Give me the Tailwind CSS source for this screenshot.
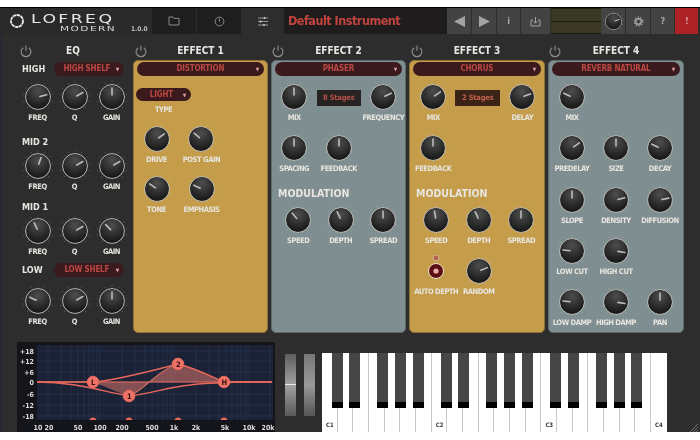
<!DOCTYPE html>
<html lang="en">
<head>
<meta charset="UTF-8">
<title>LoFreq Modern</title>
<script src="https://cdn.jsdelivr.net/npm/@tailwindcss/browser@4"></script>
</head>
<body class="w-[700px] h-[440px] overflow-hidden bg-white font-['DejaVu_Sans',sans-serif] font-stretch-condensed">

<!-- shared shapes -->
<svg class="absolute w-0 h-0">
  <defs>
    <radialGradient id="cap" cx="50%" cy="25%" r="75%">
      <stop offset="0" stop-color="#4e4e4e"/>
      <stop offset="1" stop-color="#171717"/>
    </radialGradient>
  </defs>
  <symbol id="knob" viewBox="0 0 32 32">
    <path d="M5.4 26.6h.01M1.7 20.6h.01M1.2 13.7h.01M3.9 7.2h.01M9.2 2.6h.01M16 1h.01M22.8 2.6h.01M28.1 7.2h.01M30.8 13.7h.01M30.3 20.6h.01M26.6 26.6h.01" stroke="#e8e4da" stroke-opacity=".35" stroke-width=".9" stroke-linecap="round"/>
    <circle cx="16" cy="16" r="12.400" fill="#222" stroke="#e4e2dc" stroke-width=".8"/>
    <circle cx="16" cy="16" r="11.400" fill="url(#cap)"/>
  </symbol>
  <symbol id="ptr" viewBox="0 0 32 32">
    <path d="M16 14V7" stroke="#bcbcbc" stroke-width="1.600" stroke-linecap="round"/>
  </symbol>
  <symbol id="power" viewBox="0 0 12 12">
    <path d="M3.6 3.2a4.2 4.2 0 1 0 4.8 0M6 1.2v4.600" fill="none" stroke="#8c8c8c" stroke-width="1"/>
  </symbol>
</svg>

<div class="mt-[7px] h-[425px] w-[700px] flex flex-col bg-[#2d2d2e] border-t border-black shadow-[inset_2px_0_0_#262a33] text-[7.5px] tracking-[-0.45px] leading-[10px] font-bold text-[#e8e6e0] relative blur-[0.4px]">

  <!-- top bar -->
  <header class="h-[26px] flex shrink-0">
    <div class="w-[152px] bg-[#2a2a2b] flex relative">
      <svg class="w-[16px] h-[16px] ml-[9px] mt-[5px] shrink-0" viewBox="0 0 16 16"><circle cx="8" cy="8" r="6" fill="none" stroke="#eee" stroke-width="1.800" stroke-dasharray="3.400 .5"/></svg>
      <div class="ml-[6px] flex flex-col w-[90px] font-stretch-normal font-normal">
        <span class="block text-[11.5px] leading-[10px] mt-[6px] tracking-[1.6px] text-[#e6e6e6] scale-x-150 origin-left">LOFREQ</span>
        <span class="block text-[7px] leading-[7px] mt-[2px] ml-[29px] tracking-[1px] text-[#d8d8d8] scale-x-150 origin-left">MODERN</span>
      </div>
      <span class="absolute left-[131px] top-[16px] text-[6.5px] tracking-normal text-[#bdbdbd]">1.0.0</span>
    </div>
    <div class="w-[44px] bg-[#1e1e1f] flex items-center justify-center">
      <svg class="w-[12px] h-[10px]" viewBox="0 0 12 10"><path d="M1 9V1h4l1 1.400h5V9z" fill="none" stroke="#8a8a8a"/></svg>
    </div>
    <div class="w-[45px] bg-[#1e1e1f] border-l border-[#2a2a2a] flex items-center justify-center">
      <svg class="w-[11px] h-[11px]" viewBox="0 0 11 11"><circle cx="5.500" cy="5.500" r="4.400" fill="none" stroke="#8a8a8a"/><path d="M5.500 5.500V2.600" stroke="#8a8a8a"/></svg>
    </div>
    <div class="w-[43px] flex items-center justify-center">
      <svg class="w-[12px] h-[11px]" viewBox="0 0 12 11"><path d="M1 2h10M1 5.500h10M1 9h10" stroke="#9a9a9a"/><path d="M7.500 1v2M3.500 4.500v2M7 8v2" stroke="#ccc" stroke-width="1.400"/></svg>
    </div>
    <div class="w-[163px] bg-[#1e1c1c] flex items-center pl-[4px] text-[12.5px] tracking-[-0.5px] leading-none text-[#c2443f]">Default Instrument</div>
    <div class="w-[24px] bg-[#434344] flex items-center justify-center">
      <svg class="w-[13px] h-[13px]" viewBox="0 0 13 13"><path d="M12 1v11L1 6.500z" fill="#a4a4a4"/></svg>
    </div>
    <div class="w-[24px] ml-px bg-[#434344] flex items-center justify-center">
      <svg class="w-[13px] h-[13px]" viewBox="0 0 13 13"><path d="M1 1v11l11-5.500z" fill="#a4a4a4"/></svg>
    </div>
    <div class="w-[23px] ml-px bg-[#434344] flex items-center justify-center text-[9px] text-[#a8a8a8]">i</div>
    <div class="w-[29px] ml-px bg-[#434344] flex items-center justify-center">
      <svg class="w-[11px] h-[11px]" viewBox="0 0 11 11"><path d="M3 4H1v6h9V4H8M5.500 1v6M3.500 5.200l2 2 2-2" fill="none" stroke="#a4a4a4"/></svg>
    </div>
    <div class="w-[50px] ml-px flex flex-col bg-[#1e1c14]">
      <div class="h-[12px] mt-px bg-[#3c3826]"></div>
      <div class="h-[11px] mt-px bg-[#3c3826]"></div>
    </div>
    <div class="w-[24px] bg-[#434344] flex items-center justify-center">
      <svg class="w-[21px] h-[21px]" viewBox="0 0 32 32"><use href="#knob" width="32" height="32"/><use href="#ptr" width="32" height="32" transform="rotate(70 16 16)"/></svg>
    </div>
    <div class="w-[24px] ml-px bg-[#434344] flex items-center justify-center">
      <svg class="w-[11px] h-[11px]" viewBox="0 0 11 11"><circle cx="5.500" cy="5.500" r="2.800" fill="none" stroke="#a8a8a8" stroke-width="1.400"/><circle cx="5.500" cy="5.500" r="4.300" fill="none" stroke="#a8a8a8" stroke-width="1.300" stroke-dasharray="1.300 1.400"/></svg>
    </div>
    <div class="w-[23px] ml-px bg-[#434344] flex items-center justify-center text-[9px] text-[#a8a8a8]">?</div>
    <div class="w-[23px] ml-px bg-[#ad2226] flex items-center justify-center text-[9px] text-[#d8a0a0]">!</div>
  </header>

  <main class="flex pt-[8px] h-[299px] shrink-0">

    <!-- EQ -->
    <section class="w-[133px] shrink-0">
      <div class="h-[18px] flex items-center pl-[19px] text-[10px] tracking-normal">
        <svg class="w-[14px] h-[14px]"><use href="#power" width="14" height="14"/></svg>
        <span class="w-[80px] text-center">EQ</span>
      </div>
      <div class="pt-[2px] flex flex-col">
        <div class="h-[14px] flex items-center pl-[22px] text-[9px] tracking-normal">
          <span class="w-[32px]">HIGH</span>
          <div class="w-[70px] h-[14px] rounded-full bg-[#3a1a1c] flex items-center text-[#bb4843] text-[8px] tracking-[-0.2px]"><span class="flex-1 text-center pl-[4px]">HIGH SHELF</span><span class="text-[5px] text-[#e0a0a0] pr-[5px]">▼</span></div>
        </div>
        <div class="mt-[5px] pl-[19px] grid grid-cols-[repeat(3,37px)] justify-items-center">
          <div class="flex flex-col items-center"><svg class="w-8 h-8"><use href="#knob" width="32" height="32"/><use href="#ptr" width="32" height="32" transform="rotate(75 16 16)"/></svg>FREQ</div>
          <div class="flex flex-col items-center"><svg class="w-8 h-8"><use href="#knob" width="32" height="32"/><use href="#ptr" width="32" height="32" transform="rotate(60 16 16)"/></svg>Q</div>
          <div class="flex flex-col items-center"><svg class="w-8 h-8"><use href="#knob" width="32" height="32"/><use href="#ptr" width="32" height="32"/></svg>GAIN</div>
        </div>
        <div class="h-[14px] mt-[12px] flex items-center pl-[22px] text-[9px] tracking-normal">MID 2</div>
        <div class="mt-[1px] pl-[19px] grid grid-cols-[repeat(3,37px)] justify-items-center">
          <div class="flex flex-col items-center"><svg class="w-8 h-8"><use href="#knob" width="32" height="32"/><use href="#ptr" width="32" height="32" transform="rotate(20 16 16)"/></svg>FREQ</div>
          <div class="flex flex-col items-center"><svg class="w-8 h-8"><use href="#knob" width="32" height="32"/><use href="#ptr" width="32" height="32" transform="rotate(60 16 16)"/></svg>Q</div>
          <div class="flex flex-col items-center"><svg class="w-8 h-8"><use href="#knob" width="32" height="32"/><use href="#ptr" width="32" height="32" transform="rotate(60 16 16)"/></svg>GAIN</div>
        </div>
        <div class="h-[14px] mt-[8px] flex items-center pl-[22px] text-[9px] tracking-normal">MID 1</div>
        <div class="mt-[1px] pl-[19px] grid grid-cols-[repeat(3,37px)] justify-items-center">
          <div class="flex flex-col items-center"><svg class="w-8 h-8"><use href="#knob" width="32" height="32"/><use href="#ptr" width="32" height="32" transform="rotate(-25 16 16)"/></svg>FREQ</div>
          <div class="flex flex-col items-center"><svg class="w-8 h-8"><use href="#knob" width="32" height="32"/><use href="#ptr" width="32" height="32" transform="rotate(60 16 16)"/></svg>Q</div>
          <div class="flex flex-col items-center"><svg class="w-8 h-8"><use href="#knob" width="32" height="32"/><use href="#ptr" width="32" height="32" transform="rotate(-45 16 16)"/></svg>GAIN</div>
        </div>
        <div class="h-[14px] mt-[6px] flex items-center pl-[22px] text-[9px] tracking-normal">
          <span class="w-[32px]">LOW</span>
          <div class="w-[70px] h-[14px] rounded-full bg-[#3a1a1c] flex items-center text-[#bb4843] text-[8px] tracking-[-0.2px]"><span class="flex-1 text-center pl-[4px]">LOW SHELF</span><span class="text-[5px] text-[#e0a0a0] pr-[5px]">▼</span></div>
        </div>
        <div class="mt-[8px] pl-[19px] grid grid-cols-[repeat(3,37px)] justify-items-center">
          <div class="flex flex-col items-center"><svg class="w-8 h-8"><use href="#knob" width="32" height="32"/><use href="#ptr" width="32" height="32" transform="rotate(-65 16 16)"/></svg>FREQ</div>
          <div class="flex flex-col items-center"><svg class="w-8 h-8"><use href="#knob" width="32" height="32"/><use href="#ptr" width="32" height="32" transform="rotate(60 16 16)"/></svg>Q</div>
          <div class="flex flex-col items-center"><svg class="w-8 h-8"><use href="#knob" width="32" height="32"/><use href="#ptr" width="32" height="32"/></svg>GAIN</div>
        </div>
      </div>
    </section>

    <!-- Effect 1 -->
    <section class="w-[135px] shrink-0">
      <div class="h-[18px] flex items-center pl-[1px] text-[10px] tracking-normal">
        <svg class="w-[14px] h-[14px]"><use href="#power" width="14" height="14"/></svg>
        <span class="flex-1 text-center pr-[15px]">EFFECT 1</span>
      </div>
      <div class="h-[273px] rounded-[5px] bg-[#c49c4a] border border-[#8f7233]">
        <div class="mx-[3px] mt-px h-[14px] rounded-full bg-[#3a1a1c] flex items-center text-[#bb4843] text-[8px] tracking-[-0.2px]"><span class="flex-1 text-center pl-[8px]">DISTORTION</span><span class="text-[5px] text-[#e0a0a0] pr-[5px]">▼</span></div>
        <div class="mt-[12px] ml-[2px] w-[55px]">
          <div class="h-[13px] rounded-full bg-[#3a1a1c] flex items-center text-[#bb4843] text-[8px] tracking-[-0.2px]"><span class="flex-1 text-center pl-[4px]">LIGHT</span><span class="text-[5px] text-[#e0a0a0] pr-[5px]">▼</span></div>
          <div class="mt-[4px] text-center">TYPE</div>
        </div>
        <div class="mt-[8px] grid grid-cols-[repeat(2,45px)] gap-y-[8px] justify-items-center whitespace-nowrap">
          <div class="flex flex-col items-center"><svg class="w-8 h-8"><use href="#knob" width="32" height="32"/><use href="#ptr" width="32" height="32" transform="rotate(55 16 16)"/></svg>DRIVE</div>
          <div class="flex flex-col items-center"><svg class="w-8 h-8"><use href="#knob" width="32" height="32"/><use href="#ptr" width="32" height="32" transform="rotate(-50 16 16)"/></svg>POST GAIN</div>
          <div class="flex flex-col items-center"><svg class="w-8 h-8"><use href="#knob" width="32" height="32"/><use href="#ptr" width="32" height="32" transform="rotate(-55 16 16)"/></svg>TONE</div>
          <div class="flex flex-col items-center"><svg class="w-8 h-8"><use href="#knob" width="32" height="32"/><use href="#ptr" width="32" height="32" transform="rotate(-65 16 16)"/></svg>EMPHASIS</div>
        </div>
      </div>
    </section>

    <!-- Effect 2 -->
    <section class="w-[135px] ml-[3px] shrink-0">
      <div class="h-[18px] flex items-center text-[10px] tracking-normal">
        <svg class="w-[14px] h-[14px]"><use href="#power" width="14" height="14"/></svg>
        <span class="flex-1 text-center pr-[14px]">EFFECT 2</span>
      </div>
      <div class="h-[273px] rounded-[5px] bg-[#7f8e90] border border-[#5d6a6b]">
        <div class="mx-[3px] mt-px h-[14px] rounded-full bg-[#3a1a1c] flex items-center text-[#bb4843] text-[8px] tracking-[-0.2px]"><span class="flex-1 text-center pl-[8px]">PHASER</span><span class="text-[5px] text-[#e0a0a0] pr-[5px]">▼</span></div>
        <div class="mt-[5px] grid grid-cols-[repeat(3,44.5px)] gap-y-[9px] justify-items-center whitespace-nowrap">
          <div class="flex flex-col items-center"><svg class="w-8 h-8"><use href="#knob" width="32" height="32"/><use href="#ptr" width="32" height="32"/></svg>MIX</div>
          <div class="w-[44px] h-[16px] mt-[9px] bg-[#262322] flex items-center justify-center text-[7.5px] tracking-[-0.2px] text-[#b8504a]">8 Stages</div>
          <div class="flex flex-col items-center"><svg class="w-8 h-8"><use href="#knob" width="32" height="32"/><use href="#ptr" width="32" height="32" transform="rotate(65 16 16)"/></svg>FREQUENCY</div>
          <div class="flex flex-col items-center"><svg class="w-8 h-8"><use href="#knob" width="32" height="32"/><use href="#ptr" width="32" height="32"/></svg>SPACING</div>
          <div class="flex flex-col items-center"><svg class="w-8 h-8"><use href="#knob" width="32" height="32"/><use href="#ptr" width="32" height="32"/></svg>FEEDBACK</div>
        </div>
        <div class="mt-[12px] ml-[6px] h-[14px] text-[10.5px] tracking-normal leading-[14px]">MODULATION</div>
        <div class="mt-[4px] pl-[5px] grid grid-cols-[repeat(3,42.5px)] justify-items-center">
          <div class="flex flex-col items-center"><svg class="w-8 h-8"><use href="#knob" width="32" height="32"/><use href="#ptr" width="32" height="32" transform="rotate(-40 16 16)"/></svg>SPEED</div>
          <div class="flex flex-col items-center"><svg class="w-8 h-8"><use href="#knob" width="32" height="32"/><use href="#ptr" width="32" height="32" transform="rotate(-25 16 16)"/></svg>DEPTH</div>
          <div class="flex flex-col items-center"><svg class="w-8 h-8"><use href="#knob" width="32" height="32"/><use href="#ptr" width="32" height="32"/></svg>SPREAD</div>
        </div>
      </div>
    </section>

    <!-- Effect 3 -->
    <section class="w-[136px] ml-[3px] shrink-0">
      <div class="h-[18px] flex items-center text-[10px] tracking-normal">
        <svg class="w-[14px] h-[14px] ml-px"><use href="#power" width="14" height="14"/></svg>
        <span class="flex-1 text-center pr-[15px]">EFFECT 3</span>
      </div>
      <div class="h-[273px] rounded-[5px] bg-[#c49c4a] border border-[#8f7233]">
        <div class="mx-[3px] mt-px h-[14px] rounded-full bg-[#3a1a1c] flex items-center text-[#bb4843] text-[8px] tracking-[-0.2px]"><span class="flex-1 text-center pl-[8px]">CHORUS</span><span class="text-[5px] text-[#e0a0a0] pr-[5px]">▼</span></div>
        <div class="mt-[5px] pl-px grid grid-cols-[repeat(3,44.5px)] gap-y-[9px] justify-items-center whitespace-nowrap">
          <div class="flex flex-col items-center"><svg class="w-8 h-8"><use href="#knob" width="32" height="32"/><use href="#ptr" width="32" height="32" transform="rotate(55 16 16)"/></svg>MIX</div>
          <div class="w-[45px] h-[16px] mt-[9px] bg-[#3a2418] flex items-center justify-center text-[7.5px] tracking-[-0.2px] text-[#c2604a]">2 Stages</div>
          <div class="flex flex-col items-center"><svg class="w-8 h-8"><use href="#knob" width="32" height="32"/><use href="#ptr" width="32" height="32" transform="rotate(70 16 16)"/></svg>DELAY</div>
          <div class="flex flex-col items-center"><svg class="w-8 h-8"><use href="#knob" width="32" height="32"/><use href="#ptr" width="32" height="32"/></svg>FEEDBACK</div>
        </div>
        <div class="mt-[12px] ml-[6px] h-[14px] text-[10.5px] tracking-normal leading-[14px]">MODULATION</div>
        <div class="mt-[4px] pl-[5px] grid grid-cols-[repeat(3,42.5px)] gap-y-[9px] justify-items-center whitespace-nowrap">
          <div class="flex flex-col items-center"><svg class="w-8 h-8"><use href="#knob" width="32" height="32"/><use href="#ptr" width="32" height="32" transform="rotate(-10 16 16)"/></svg>SPEED</div>
          <div class="flex flex-col items-center"><svg class="w-8 h-8"><use href="#knob" width="32" height="32"/><use href="#ptr" width="32" height="32" transform="rotate(-25 16 16)"/></svg>DEPTH</div>
          <div class="flex flex-col items-center"><svg class="w-8 h-8"><use href="#knob" width="32" height="32"/><use href="#ptr" width="32" height="32"/></svg>SPREAD</div>
          <div class="flex flex-col items-center"><svg class="w-8 h-8" viewBox="0 0 32 32"><circle cx="16" cy="3" r="3" fill="#b5674a" stroke="#e8dcc0" stroke-width=".6"/><circle cx="16" cy="16" r="7.500" fill="#5c0f14" stroke="#eee4d0"/><circle cx="16" cy="16" r="2.600" fill="#e8b0a8"/></svg>AUTO DEPTH</div>
          <div class="flex flex-col items-center"><svg class="w-8 h-8"><use href="#knob" width="32" height="32"/><use href="#ptr" width="32" height="32" transform="rotate(68 16 16)"/></svg>RANDOM</div>
        </div>
      </div>
    </section>

    <!-- Effect 4 -->
    <section class="w-[136px] ml-[3px] shrink-0">
      <div class="h-[18px] flex items-center text-[10px] tracking-normal">
        <svg class="w-[14px] h-[14px]"><use href="#power" width="14" height="14"/></svg>
        <span class="flex-1 text-center pr-[14px]">EFFECT 4</span>
      </div>
      <div class="h-[273px] rounded-[5px] bg-[#7f8e90] border border-[#5d6a6b]">
        <div class="mx-[3px] mt-px h-[14px] rounded-full bg-[#3a1a1c] flex items-center text-[#bb4843] text-[8px] tracking-[-0.2px]"><span class="flex-1 text-center pl-[8px]">REVERB NATURAL</span><span class="text-[5px] text-[#e0a0a0] pr-[5px]">▼</span></div>
        <div class="mt-[5px] pl-px grid grid-cols-[repeat(3,44px)] gap-y-[9.25px] justify-items-center whitespace-nowrap">
          <div class="flex flex-col items-center"><svg class="w-8 h-8"><use href="#knob" width="32" height="32"/><use href="#ptr" width="32" height="32" transform="rotate(-65 16 16)"/></svg>MIX</div>
          <div></div>
          <div></div>
          <div class="flex flex-col items-center"><svg class="w-8 h-8"><use href="#knob" width="32" height="32"/><use href="#ptr" width="32" height="32" transform="rotate(55 16 16)"/></svg>PREDELAY</div>
          <div class="flex flex-col items-center"><svg class="w-8 h-8"><use href="#knob" width="32" height="32"/><use href="#ptr" width="32" height="32"/></svg>SIZE</div>
          <div class="flex flex-col items-center"><svg class="w-8 h-8"><use href="#knob" width="32" height="32"/><use href="#ptr" width="32" height="32" transform="rotate(-65 16 16)"/></svg>DECAY</div>
          <div class="flex flex-col items-center"><svg class="w-8 h-8"><use href="#knob" width="32" height="32"/><use href="#ptr" width="32" height="32"/></svg>SLOPE</div>
          <div class="flex flex-col items-center"><svg class="w-8 h-8"><use href="#knob" width="32" height="32"/><use href="#ptr" width="32" height="32" transform="rotate(75 16 16)"/></svg>DENSITY</div>
          <div class="flex flex-col items-center"><svg class="w-8 h-8"><use href="#knob" width="32" height="32"/><use href="#ptr" width="32" height="32" transform="rotate(78 16 16)"/></svg>DIFFUSION</div>
          <div class="flex flex-col items-center"><svg class="w-8 h-8"><use href="#knob" width="32" height="32"/><use href="#ptr" width="32" height="32" transform="rotate(-84 16 16)"/></svg>LOW CUT</div>
          <div class="flex flex-col items-center"><svg class="w-8 h-8"><use href="#knob" width="32" height="32"/><use href="#ptr" width="32" height="32" transform="rotate(100 16 16)"/></svg>HIGH CUT</div>
          <div></div>
          <div class="flex flex-col items-center"><svg class="w-8 h-8"><use href="#knob" width="32" height="32"/><use href="#ptr" width="32" height="32" transform="rotate(-84 16 16)"/></svg>LOW DAMP</div>
          <div class="flex flex-col items-center"><svg class="w-8 h-8"><use href="#knob" width="32" height="32"/><use href="#ptr" width="32" height="32" transform="rotate(100 16 16)"/></svg>HIGH DAMP</div>
          <div class="flex flex-col items-center"><svg class="w-8 h-8"><use href="#knob" width="32" height="32"/><use href="#ptr" width="32" height="32"/></svg>PAN</div>
        </div>
      </div>
    </section>
  </main>

  <!-- EQ curve, wheels and keyboard -->
  <div class="flex pl-[17px] pt-[9px] flex-1 min-h-0 relative">
    <svg class="w-[258px] h-[90px] shrink-0" viewBox="17 342 258 90">
      <defs><clipPath id="plot"><rect x="37" y="345" width="236" height="75"/></clipPath></defs>
      <rect x="17" y="342" width="258" height="90" fill="#13151b"/>
      <rect x="37" y="345" width="236" height="75" fill="#1b2236"/>
      <path d="M48 345v75M61 345v75M71 345v75M78 345v75M84 345v75M89 345v75M93 345v75M97 345v75M100 345v75M122 345v75M135 345v75M145 345v75M152 345v75M158 345v75M163 345v75M167 345v75M171 345v75M174 345v75M196 345v75M209 345v75M219 345v75M226 345v75M232 345v75M237 345v75M241 345v75M245 345v75M248 345v75M270 345v75M37 351h236M37 361h236M37 372h236M37 394h236M37 405h236M37 416h236" stroke="#2c3552" stroke-width=".7"/>
      <path d="M37 382h236" stroke="#3e465f"/>
      <g clip-path="url(#plot)">
        <path d="M93 382C105 386 118 393 129 396C142 392 158 370 178 364C195 368 210 376 224 382Z" fill="#d9756b" fill-opacity=".55"/>
        <path d="M37 382C75 382 100 391 129 396C150 394 168 387 190 385C205 383 220 382 272 382" fill="none" stroke="#e8685a" stroke-width="1.400"/>
        <path d="M37 382C70 382 85 382 93 382C112 381 140 374 178 364C195 368 210 376 224 382C240 382 255 382 272 382" fill="none" stroke="#e8685a" stroke-width="1.400"/>
        <path d="M37 382H272" fill="none" stroke="#e8685a" stroke-width="1.200"/>
        <path d="M129 396C142 392 158 370 178 364" fill="none" stroke="#c96a60" stroke-width="1.200"/>
        <circle cx="93" cy="421" r="3.500" fill="#e8685a"/>
        <circle cx="129" cy="421" r="3.500" fill="#e8685a"/>
        <circle cx="178" cy="421" r="3.500" fill="#e8685a"/>
        <circle cx="224" cy="421" r="3.500" fill="#e8685a"/>
      </g>
      <g fill="#ee7268" stroke="#e8685a">
        <circle cx="93" cy="382" r="5.800"/>
        <circle cx="129" cy="396" r="5.800"/>
        <circle cx="178" cy="364" r="5.800"/>
        <circle cx="224" cy="382" r="5.800"/>
      </g>
      <g fill="#3a1212" stroke="none" font-size="7.500" text-anchor="middle">
        <text x="93" y="385">L</text>
        <text x="129" y="399">1</text>
        <text x="178" y="367">2</text>
        <text x="224" y="385">H</text>
      </g>
      <g fill="#dcdcdc" font-size="7" text-anchor="end" letter-spacing="0">
        <text x="34" y="354">+18</text>
        <text x="34" y="364">+12</text>
        <text x="34" y="375">+6</text>
        <text x="34" y="385">0</text>
        <text x="34" y="397">-6</text>
        <text x="34" y="408">-12</text>
        <text x="34" y="419">-18</text>
      </g>
      <g fill="#dcdcdc" font-size="7" text-anchor="middle" letter-spacing="0">
        <text x="38" y="430">10</text>
        <text x="49" y="430">20</text>
        <text x="78" y="430">50</text>
        <text x="100" y="430">100</text>
        <text x="122" y="430">200</text>
        <text x="152" y="430">500</text>
        <text x="174" y="430">1k</text>
        <text x="196" y="430">2k</text>
        <text x="225" y="430">5k</text>
        <text x="249" y="430">10k</text>
        <text x="268" y="430">20k</text>
      </g>
    </svg>

    <div class="ml-[10px] mt-[12px] w-[11px] h-[62px] bg-gradient-to-b from-[#5e5e5e] via-[#a2a2a2] to-[#5a5a5a] relative">
      <div class="absolute left-0 right-0 top-[30px] h-px bg-[#ececec]"></div>
    </div>
    <div class="ml-[8px] mt-[12px] w-[11px] h-[62px] bg-gradient-to-b from-[#777] via-[#999] to-[#555]"></div>

    <div class="ml-[7px] mt-[11px] w-[345px] h-[79px] bg-white flex relative text-[6px] tracking-normal text-[#333]">
      <div class="w-[15.68px] border-r border-[#c8c8c8] flex items-end pl-[4px] pb-[2px]">C1</div>
      <div class="w-[15.68px] border-r border-[#c8c8c8]"></div>
      <div class="w-[15.68px] border-r border-[#c8c8c8]"></div>
      <div class="w-[15.68px] border-r border-[#c8c8c8]"></div>
      <div class="w-[15.68px] border-r border-[#c8c8c8]"></div>
      <div class="w-[15.68px] border-r border-[#c8c8c8]"></div>
      <div class="w-[15.68px] border-r border-[#c8c8c8]"></div>
      <div class="w-[15.68px] border-r border-[#c8c8c8] flex items-end pl-[4px] pb-[2px]">C2</div>
      <div class="w-[15.68px] border-r border-[#c8c8c8]"></div>
      <div class="w-[15.68px] border-r border-[#c8c8c8]"></div>
      <div class="w-[15.68px] border-r border-[#c8c8c8]"></div>
      <div class="w-[15.68px] border-r border-[#c8c8c8]"></div>
      <div class="w-[15.68px] border-r border-[#c8c8c8]"></div>
      <div class="w-[15.68px] border-r border-[#c8c8c8]"></div>
      <div class="w-[15.68px] border-r border-[#c8c8c8] flex items-end pl-[4px] pb-[2px]">C3</div>
      <div class="w-[15.68px] border-r border-[#c8c8c8]"></div>
      <div class="w-[15.68px] border-r border-[#c8c8c8]"></div>
      <div class="w-[15.68px] border-r border-[#c8c8c8]"></div>
      <div class="w-[15.68px] border-r border-[#c8c8c8]"></div>
      <div class="w-[15.68px] border-r border-[#c8c8c8]"></div>
      <div class="w-[15.68px] border-r border-[#c8c8c8]"></div>
      <div class="w-[15.68px] flex items-end pl-[4px] pb-[2px]">C4</div>
      <!-- black keys -->
      <div class="absolute top-0 left-[9.5px] w-[11px] h-[55px] bg-[#464646] border-b-[6px] border-black"></div>
      <div class="absolute top-0 left-[27.2px] w-[11px] h-[55px] bg-[#464646] border-b-[6px] border-black"></div>
      <div class="absolute top-0 left-[55.2px] w-[11px] h-[55px] bg-[#464646] border-b-[6px] border-black"></div>
      <div class="absolute top-0 left-[72.8px] w-[11px] h-[55px] bg-[#464646] border-b-[6px] border-black"></div>
      <div class="absolute top-0 left-[90.5px] w-[11px] h-[55px] bg-[#464646] border-b-[6px] border-black"></div>
      <div class="absolute top-0 left-[118.5px] w-[11px] h-[55px] bg-[#464646] border-b-[6px] border-black"></div>
      <div class="absolute top-0 left-[136.2px] w-[11px] h-[55px] bg-[#464646] border-b-[6px] border-black"></div>
      <div class="absolute top-0 left-[164.2px] w-[11px] h-[55px] bg-[#464646] border-b-[6px] border-black"></div>
      <div class="absolute top-0 left-[182.2px] w-[11px] h-[55px] bg-[#464646] border-b-[6px] border-black"></div>
      <div class="absolute top-0 left-[199.8px] w-[11px] h-[55px] bg-[#464646] border-b-[6px] border-black"></div>
      <div class="absolute top-0 left-[228.2px] w-[11px] h-[55px] bg-[#464646] border-b-[6px] border-black"></div>
      <div class="absolute top-0 left-[245.5px] w-[11px] h-[55px] bg-[#464646] border-b-[6px] border-black"></div>
      <div class="absolute top-0 left-[273.8px] w-[11px] h-[55px] bg-[#464646] border-b-[6px] border-black"></div>
      <div class="absolute top-0 left-[291.5px] w-[11px] h-[55px] bg-[#464646] border-b-[6px] border-black"></div>
      <div class="absolute top-0 left-[309.2px] w-[11px] h-[55px] bg-[#464646] border-b-[6px] border-black"></div>
    </div>

    <svg class="absolute left-[690px] top-[91px] w-[8px] h-[8px]" viewBox="0 0 8 8"><path d="M0 8L8 0M3 8L8 3M6 8L8 6" stroke="#8a8a8a" stroke-width=".7"/></svg>
  </div>
</div>
</body>
</html>
